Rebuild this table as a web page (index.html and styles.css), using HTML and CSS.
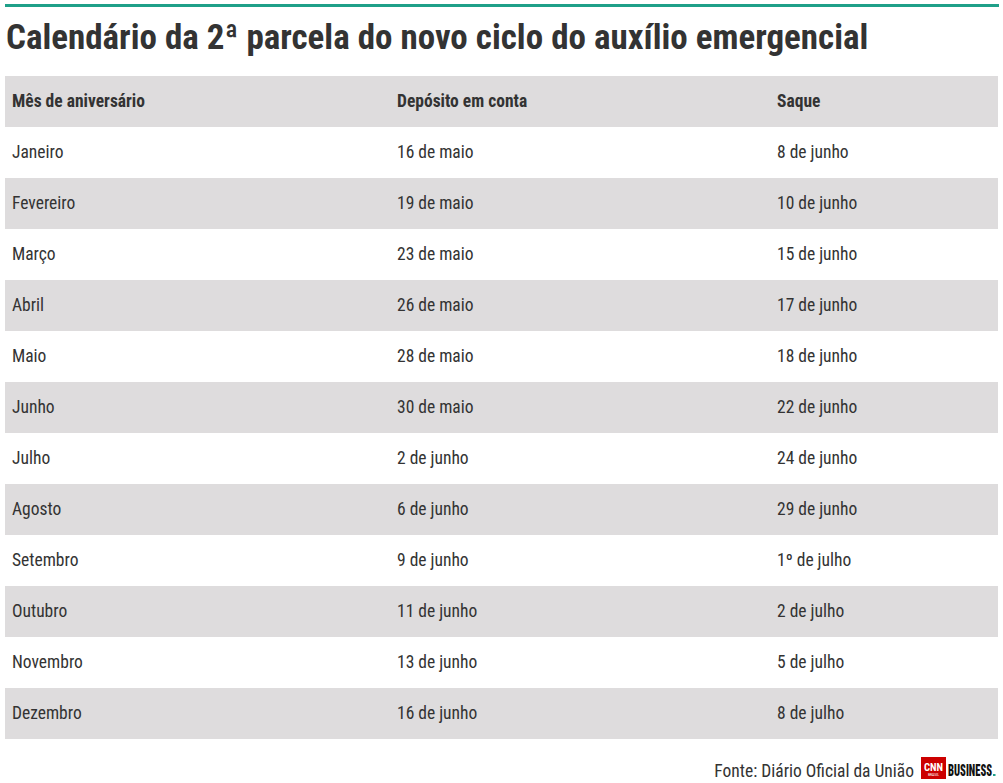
FILE: index.html
```html
<!DOCTYPE html>
<html lang="pt-BR">
<head>
<meta charset="utf-8">
<title>Calendário</title>
<link rel="stylesheet" href="styles.css">
</head>
<body>
<div class="page">
  <div class="rule"></div>
  <h1 class="title">Calendário da 2ª parcela do novo ciclo do auxílio emergencial</h1>
  <table class="cal">
    <colgroup><col class="c1"><col class="c2"><col class="c3"></colgroup>
    <thead>
      <tr><th>Mês de aniversário</th><th>Depósito em conta</th><th>Saque</th></tr>
    </thead>
    <tbody>
      <tr><td>Janeiro</td><td>16 de maio</td><td>8 de junho</td></tr>
      <tr><td>Fevereiro</td><td>19 de maio</td><td>10 de junho</td></tr>
      <tr><td>Março</td><td>23 de maio</td><td>15 de junho</td></tr>
      <tr><td>Abril</td><td>26 de maio</td><td>17 de junho</td></tr>
      <tr><td>Maio</td><td>28 de maio</td><td>18 de junho</td></tr>
      <tr><td>Junho</td><td>30 de maio</td><td>22 de junho</td></tr>
      <tr><td>Julho</td><td>2 de junho</td><td>24 de junho</td></tr>
      <tr><td>Agosto</td><td>6 de junho</td><td>29 de junho</td></tr>
      <tr><td>Setembro</td><td>9 de junho</td><td>1º de julho</td></tr>
      <tr><td>Outubro</td><td>11 de junho</td><td>2 de julho</td></tr>
      <tr><td>Novembro</td><td>13 de junho</td><td>5 de julho</td></tr>
      <tr><td>Dezembro</td><td>16 de junho</td><td>8 de julho</td></tr>
    </tbody>
  </table>
  <div class="footer">
    <span class="source">Fonte: Diário Oficial da União</span>
    <svg class="logo" width="77" height="22" viewBox="0 0 77 22" aria-label="CNN Brasil Business">
      <rect x="0" y="0" width="25" height="22" fill="#cc0000"/>
      <text x="3" y="14" class="cnn-word" textLength="19" lengthAdjust="spacingAndGlyphs">CNN</text>
      <text x="7" y="18.5" class="cnn-sub" textLength="11" lengthAdjust="spacingAndGlyphs">BRASIL</text>
      <text x="27" y="19" class="biz" textLength="44" lengthAdjust="spacingAndGlyphs">BUSINESS</text>
      <rect x="72" y="17" width="2.5" height="2" fill="#1fa089"/>
    </svg>
  </div>
</div>
</body>
</html>
```
FILE: styles.css
```css
html, body {
  margin: 0;
  padding: 0;
  background: #ffffff;
}
body {
  font-family: Roboto, "Liberation Sans", sans-serif;
  font-stretch: 75%;
  color: #333333;
}
.page {
  width: 994px;
  padding: 4px 0 0 5px;
}
.rule {
  height: 3px;
  background: #1fa089;
}
.title {
  margin: 11px 0 0 1px;
  font-size: 35px;
  line-height: 40px;
  font-weight: 700;
  color: #333333;
}
.cal {
  margin-top: 18px;
  width: 993px;
  border-collapse: collapse;
  table-layout: fixed;
  font-size: 17.5px;
}
.c1 { width: 385px; }
.c2 { width: 380px; }
.c3 { width: 228px; }
.cal th, .cal td {
  height: 51px;
  padding: 0 7px 1px;
  text-align: left;
  vertical-align: middle;
  box-sizing: border-box;
}
.cal th {
  font-weight: 700;
  background: #dedcdd;
}
.cal td {
  font-weight: 400;
}
.cal tbody tr:nth-child(even) td {
  background: #dedcdd;
}
.footer {
  display: flex;
  justify-content: flex-end;
  align-items: flex-start;
  gap: 7px;
  margin-top: 18px;
  height: 26px;
  padding-right: 1px;
  font-size: 17.5px;
}
.source {
  padding-top: 5px;
  line-height: 19px;
  color: #333333;
}
.logo {
  display: block;
}
.cnn-word {
  font-family: Roboto, sans-serif;
  font-stretch: 75%;
  font-weight: 700;
  font-size: 10px;
  fill: #ffffff;
}
.cnn-sub {
  font-family: Roboto, sans-serif;
  font-size: 3px;
  fill: #ffffff;
}
.biz {
  font-family: Roboto, sans-serif;
  font-stretch: 75%;
  font-weight: 900;
  font-size: 17px;
  fill: #111111;
}
```
